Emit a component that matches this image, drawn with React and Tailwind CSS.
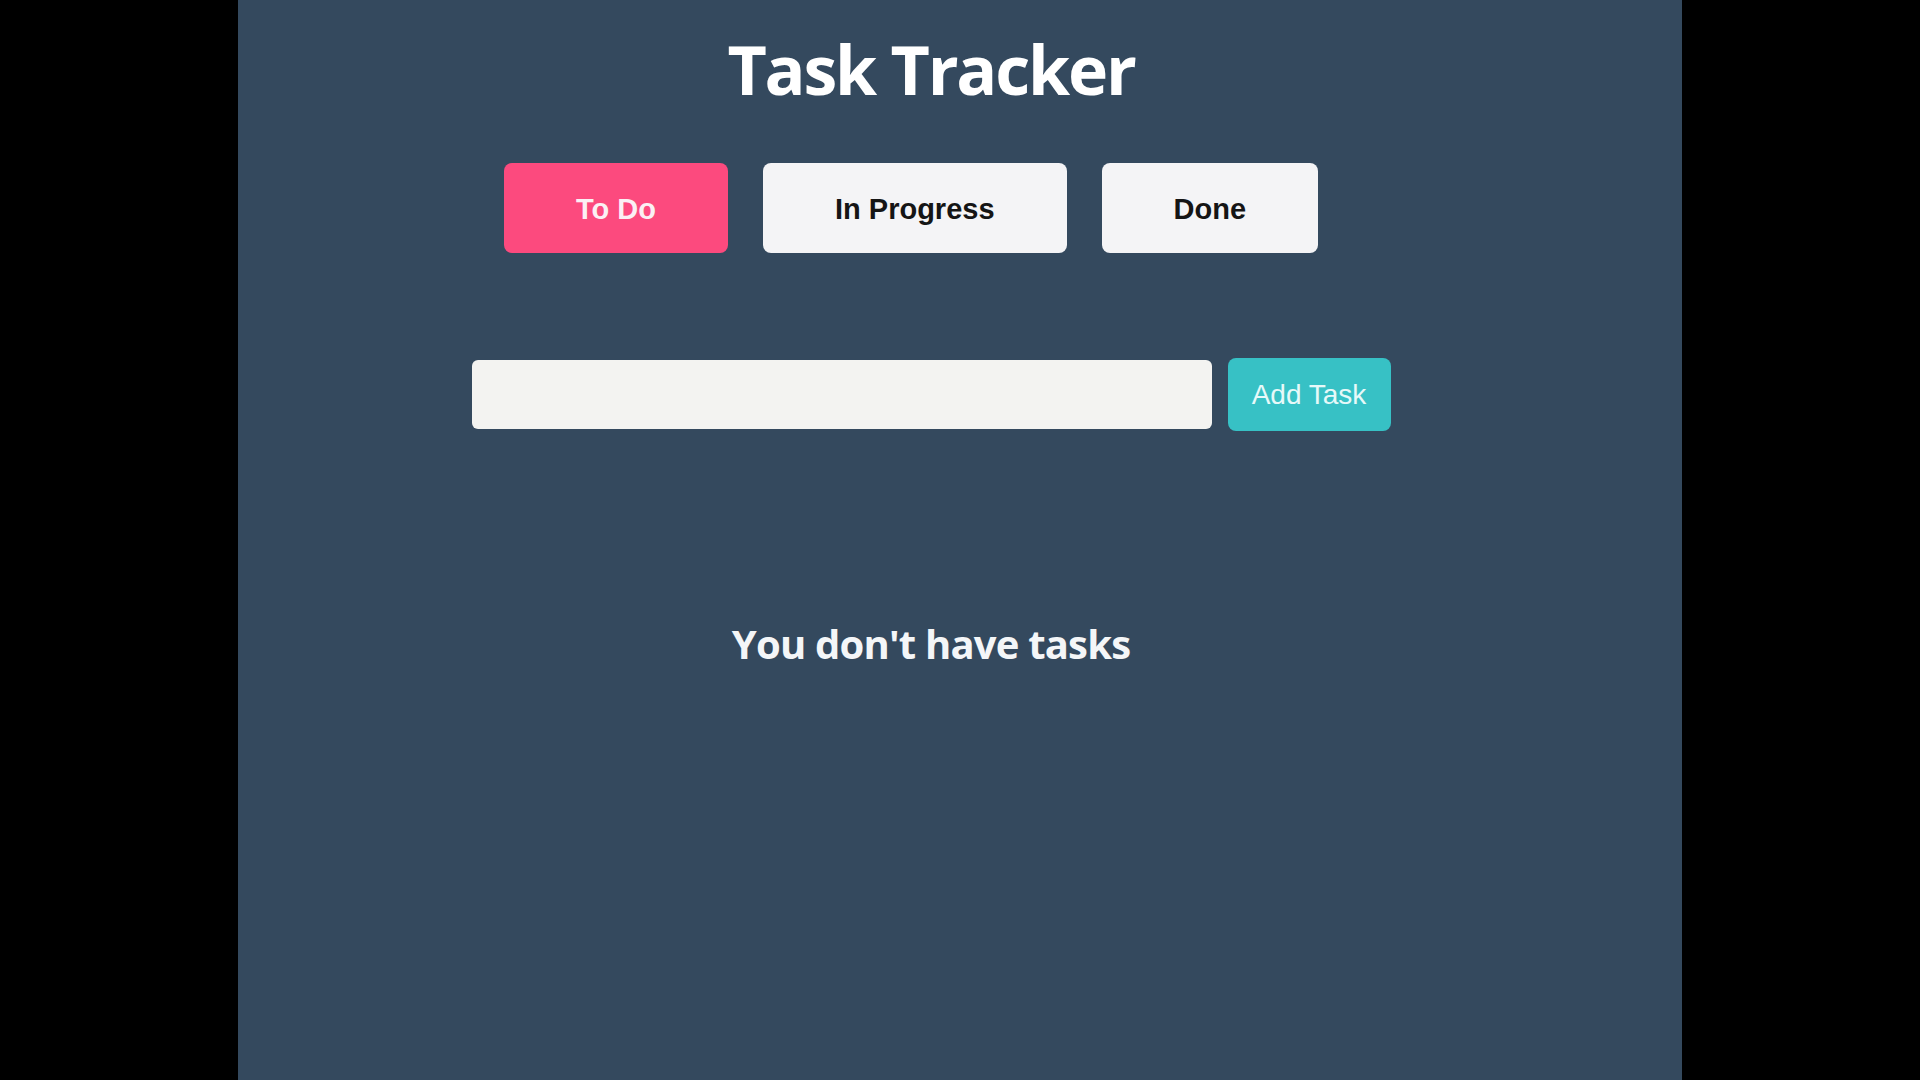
export default function App() {
  const tabs = [
    { label: "To Do", active: true },
    { label: "In Progress", active: false },
    { label: "Done", active: false },
  ];
  return (
    <div className="w-[1920px] h-[1080px] bg-black flex overflow-hidden">
      <div className="ml-[238px] w-[1444px] h-[1080px] bg-[#34495e] flex flex-col items-center pr-[58px]">
        <h1
          className="mt-[35px] text-[68px] leading-none font-bold text-white tracking-[-2.2px]"
          style={{ fontFamily: '"Open Sans", sans-serif' }}
        >
          Task Tracker
        </h1>
        <div className="mt-[60px] mr-[5px] flex" style={{ fontFamily: '"Liberation Sans", Arial, sans-serif' }}>
          {tabs.map((t) => (
            <button
              key={t.label}
              className={
                t.active
                  ? "mr-[35px] h-[90px] px-[72px] pt-[4px] rounded-lg bg-[#fc4a7e] text-[#fbf0f4] text-[29px] font-bold"
                  : "mr-[35px] h-[90px] px-[72px] pt-[4px] rounded-lg bg-[#f4f4f6] text-[#151515] text-[29px] font-bold"
              }
            >
              {t.label}
            </button>
          ))}
        </div>
        <div className="mt-[105px] flex items-center gap-[16px]" style={{ fontFamily: '"Liberation Sans", Arial, sans-serif' }}>
          <input
            type="text"
            className="w-[740px] h-[69px] rounded-md bg-[#f3f3f1] outline-none px-4 text-[24px]"
          />
          <button className="w-[163px] h-[73px] rounded-lg bg-[#37c1c5] text-[#e6f9f9] text-[28px]">
            Add Task
          </button>
        </div>
        <p
          className="mt-[193px] text-[40px] leading-none font-bold text-[#f4f6f8] tracking-[-0.8px]"
          style={{ fontFamily: '"Open Sans", sans-serif' }}
        >
          You don't have tasks
        </p>
      </div>
    </div>
  );
}
